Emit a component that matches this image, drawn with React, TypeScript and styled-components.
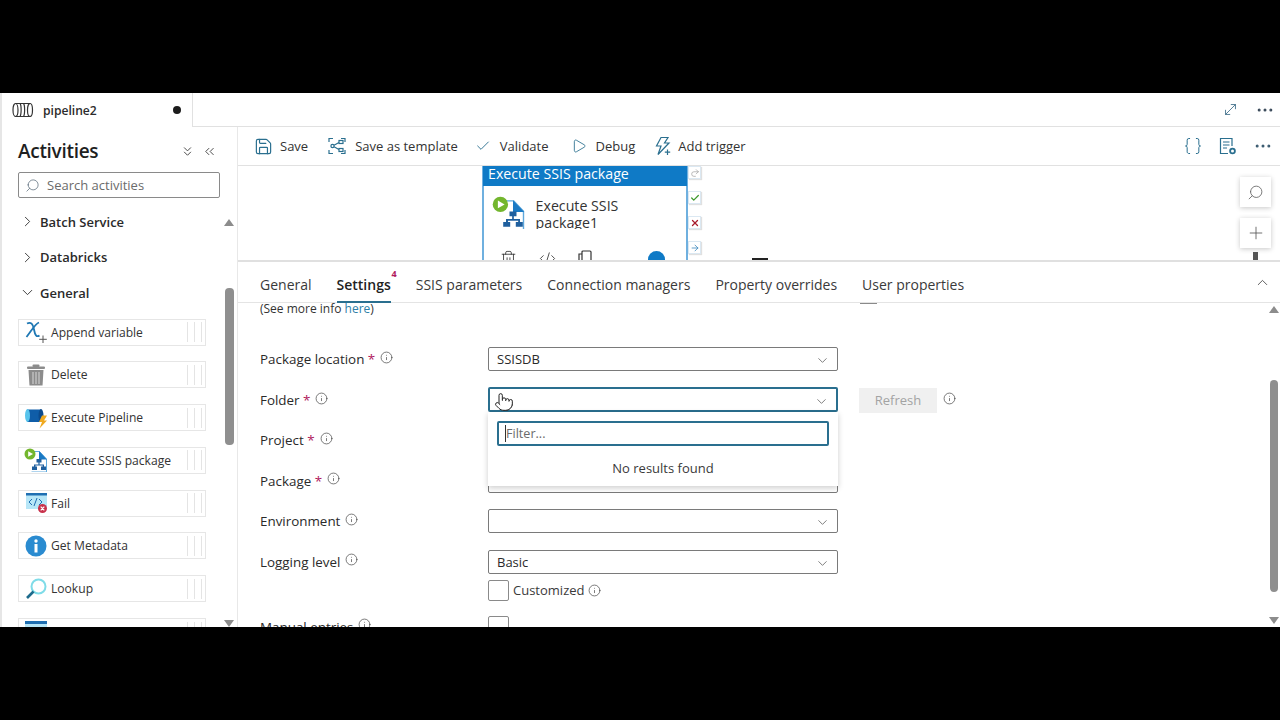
import React from "react";
import styled, { createGlobalStyle } from "styled-components";
import {
  Braces,
  Check,
  ChevronDown,
  ChevronRight,
  ChevronUp,
  ChevronsDown,
  ChevronsLeft,
  CodeXml,
  Info,
  MoveDiagonal,
  MoreHorizontal,
  Play,
  Plus,
  Pointer,
  Save,
  Search,
  Trash2,
  X,
  ArrowRight,
  Redo2,
} from "lucide-react";

const GlobalStyle = createGlobalStyle`
  html, body {
    margin: 0;
    padding: 0;
    background: #000;
    font-family: "Open Sans", "Noto Sans", sans-serif;
    color: #242424;
  }
  * { box-sizing: border-box; }
`;

const TEAL = "#2a6f8f";

/* icons */
const PipelineIcon = () => (
  <svg width="22" height="16" viewBox="0 0 22 16" fill="none" stroke="#333" strokeWidth="1.2">
    <ellipse cx="3.5" cy="8" rx="2.5" ry="6.5" />
    <path d="M3.5 1.5H18.5M3.5 14.5H18.5" />
    <ellipse cx="18" cy="8" rx="2.5" ry="6.5" />
    <path d="M8 1.5c1.5 1.5 1.5 11 0 13M11.5 1.5c1.5 1.5 1.5 11 0 13" />
  </svg>
);

const TemplateIcon = () => (
  <svg width="18" height="18" viewBox="0 0 18 18" fill="none" stroke={TEAL} strokeWidth="1.2">
    <path d="M1 5V1.5H5M13 1.5H17V5M1 13V16.5H5M13 16.5H17V13" />
    <circle cx="4.5" cy="9" r="1.6" />
    <rect x="11" y="3.5" width="4" height="3" />
    <rect x="11" y="11.5" width="4" height="3" />
    <path d="M6 8.2L11 5.5M6 9.8L11 12.5" />
  </svg>
);

const TriggerIcon = () => (
  <svg width="18" height="20" viewBox="0 0 18 20" fill="none" stroke={TEAL} strokeWidth="1.2">
    <path d="M7 1.5H14L10.5 7H15L4 18.5L7 10H2.5L7 1.5Z" />
    <path d="M13.5 13.5V19M10.8 16.2H16.2" />
  </svg>
);

const PropertiesIcon = () => (
  <svg width="18" height="19" viewBox="0 0 18 19" fill="none" stroke={TEAL} strokeWidth="1.2">
    <path d="M9 16.5H1.5V1.5H13V9" />
    <path d="M4 5H10.5M4 8H10.5M4 11H8" />
    <circle cx="13.5" cy="14" r="2.4" strokeWidth="1.8" />
  </svg>
);

const MagnifierIcon = ({ size = 16, color = "#5a6b7a" }: { size?: number; color?: string }) => (
  <Search size={size} color={color} strokeWidth={1.2} style={{ transform: "scaleX(-1)" }} />
);

const VariableIcon = () => (
  <svg width="24" height="24" viewBox="0 0 24 24" fill="none">
    <path d="M3 3.5C7 1.5 9 4 10 9.5C11 15 12.5 17.5 15.5 15.5" stroke="#1f78b4" strokeWidth="1.8" />
    <path d="M15 2.5C11 4 8 10 2.5 17" stroke="#1f78b4" strokeWidth="1.8" />
    <path d="M19 15.5V23M15.2 19.3H22.8" stroke="#555" strokeWidth="1" />
  </svg>
);

const TrashIcon = () => (
  <svg width="20" height="22" viewBox="0 0 20 22" fill="#8c8c8c">
    <rect x="6.5" y="0.5" width="7" height="2.5" rx="1" />
    <rect x="1" y="2.5" width="18" height="2.5" rx="1" />
    <path d="M2.5 6H17.5L16.5 21.5H3.5Z" />
    <path d="M7 8V20M10 8V20M13 8V20" stroke="#d8d8d8" strokeWidth="1" />
  </svg>
);

const ExecutePipelineIcon = () => (
  <svg width="24" height="22" viewBox="0 0 24 22">
    <path d="M3 2.5H17V15H3Z" fill="#0f5da8" />
    <ellipse cx="3.5" cy="8.5" rx="2.5" ry="6.5" fill="#58c4ec" />
    <ellipse cx="17" cy="8.5" rx="2.5" ry="6.5" fill="#0b4a8c" />
    <path d="M18 8.5L23 8.5L20 13.5H23L15.5 21.5L18 15H15L18 8.5Z" fill="#f0a91e" />
  </svg>
);

const SsisIcon = ({ scale = 1 }: { scale?: number }) => (
  <svg width={24 * scale} height={24 * scale} viewBox="0 0 24 24" style={{ flex: "none" }}>
    <path d="M7.5 3.5H15.5L22.5 11V24H7.5" fill="#fff" stroke="#5fa8dc" strokeWidth="1" />
    <path d="M15 3L23 11.5H15Z" fill="#1a79c4" />
    <circle cx="6" cy="6" r="5.5" fill="#73b62e" />
    <path d="M4.2 3.2L9 6L4.2 8.8Z" fill="#fff" />
    <path d="M12.5 11H17.5V14.5H15.6V16.5H20V18.5H22V22H17V18.5H18.7V17.6H11.4V18.5H13V22H8V18.5H10V16.5H14.4V14.5H12.5Z" fill="#1f5f9e" />
  </svg>
);

const FailIcon = () => (
  <svg width="23" height="22" viewBox="0 0 23 22">
    <rect x="1" y="2" width="21" height="15" fill="#b7e6f7" />
    <rect x="1" y="1" width="21" height="2.5" fill="#1f6fb2" />
    <path d="M7 7L4 10L7 13M9 14L12 6M14 7L17 10L14 13" stroke="#1f6fb2" strokeWidth="1" fill="none" />
    <circle cx="17.5" cy="16.5" r="4.5" fill="#c8314b" />
    <path d="M15.7 14.7L19.3 18.3M19.3 14.7L15.7 18.3" stroke="#fff" strokeWidth="1.2" />
  </svg>
);

const MetadataIcon = () => (
  <svg width="22" height="22" viewBox="0 0 22 22">
    <circle cx="11" cy="11" r="10.5" fill="#2a8bd0" />
    <circle cx="11" cy="6" r="1.7" fill="#fff" />
    <rect x="9.5" y="9" width="3" height="8.5" fill="#fff" />
  </svg>
);

const LookupIcon = () => (
  <svg width="24" height="24" viewBox="0 0 24 24" fill="none">
    <circle cx="14.5" cy="9.5" r="7" stroke="#7fdce8" strokeWidth="2" fill="#fff" />
    <path d="M9.5 14.5L3 21" stroke="#1d6b8c" strokeWidth="2.6" />
  </svg>
);

const ClippedIcon = () => (
  <svg width="22" height="22" viewBox="0 0 22 22">
    <rect x="0" y="0" width="22" height="20" fill="#b7e6f7" />
    <rect x="0" y="0" width="22" height="3" fill="#1f6fb2" />
  </svg>
);

/* page shell */
const Page = styled.div`
  width: 1280px;
  height: 720px;
  padding: 93px 0;
  background: #000;
  overflow: hidden;
`;

const Screen = styled.div`
  height: 534px;
  background: #fff;
  display: flex;
  flex-direction: column;
  overflow: hidden;
`;

const TabStrip = styled.div`
  height: 34px;
  flex: none;
  display: flex;
  align-items: stretch;
  justify-content: space-between;
  padding-right: 5px;
  border-bottom: 1px solid #e1e1e1;
`;

const DocTab = styled.div`
  width: 193px;
  margin-bottom: -1px;
  padding: 0 10px 0 10px;
  display: flex;
  align-items: center;
  background: #fff;
  border-right: 1px solid #e1e1e1;
  border-left: 2px solid #e6e6e6;
  font-size: 12.1px;
  font-weight: 600;
  color: #2b2b2b;
`;

const DocName = styled.span`
  margin-left: 9px;
  flex: 1;
`;

const Dirty = styled.span`
  width: 8px;
  height: 8px;
  margin-right: 1px;
  border-radius: 50%;
  background: #1c1c1c;
`;

const StripActions = styled.div`
  display: flex;
  align-items: center;
  gap: 16px;
`;

const Body = styled.div`
  flex: 1;
  min-height: 0;
  display: flex;
`;

/* activities panel */
const Sidebar = styled.aside`
  width: 238px;
  flex: none;
  display: flex;
  flex-direction: column;
  border-left: 2px solid #e6e6e6;
  border-right: 1px solid #e8e8e8;
`;

const SideHead = styled.div`
  height: 45px;
  flex: none;
  padding: 3px 20px 0 16px;
  display: flex;
  align-items: center;
  justify-content: space-between;
`;

const SideTitle = styled.h2`
  margin: 0;
  font-size: 19px;
  font-weight: 600;
  letter-spacing: -0.3px;
  color: #1f1f1f;
`;

const SideHeadIcons = styled.div`
  display: flex;
  align-items: center;
  gap: 7px;
`;

const SearchBox = styled.div`
  width: 202px;
  height: 26px;
  flex: none;
  margin-left: 16px;
  padding-left: 6px;
  display: flex;
  align-items: center;
  gap: 7px;
  border: 1px solid #8a8a8a;
  border-radius: 2px;
  font-size: 13px;
  color: #6b6b6b;
`;

const SideBody = styled.div`
  flex: 1;
  min-height: 0;
  display: flex;
`;

const ActivityList = styled.div`
  flex: 1;
  min-width: 0;
  padding: 6px 0 0 16px;
  overflow: hidden;
`;

const Group = styled.div`
  height: 35.5px;
  padding-left: 1px;
  display: flex;
  align-items: center;
  gap: 4px;
  font-size: 13px;
  font-weight: 600;
  color: #2a2a2a;
`;

const ActivityStack = styled.div`
  padding-top: 8px;
`;

const Activity = styled.div`
  width: 188px;
  height: 27px;
  margin-bottom: 15.8px;
  padding-left: 6px;
  display: flex;
  align-items: center;
  gap: 3px;
  border: 1px solid #e6e6e6;
  font-size: 12.1px;
  color: #333;
`;

const ActivityIcon = styled.span`
  width: 24px;
  height: 24px;
  flex: none;
  margin-left: -1px;
  display: flex;
  align-items: center;
  justify-content: center;
`;

const ActivityName = styled.span`
  flex: 1;
`;

const Grip = styled.span`
  width: 15px;
  height: 20px;
  margin-right: 3px;
  flex: none;
  border-left: 1px solid #e4e4e4;
  border-right: 1px solid #e4e4e4;
  background: linear-gradient(#e4e4e4, #e4e4e4) center / 1px 100% no-repeat;
`;

const ScrollTrack = styled.div`
  width: ${(p) => p.$width}px;
  flex: none;
  display: flex;
  flex-direction: column;
  align-items: center;
  background: #fff;
  padding: ${(p) => p.$pad || "0"};
`;

const ArrowUp = styled.span`
  width: 0;
  height: 0;
  flex: none;
  border-left: 5px solid transparent;
  border-right: 5px solid transparent;
  border-bottom: 7px solid #8c8c8c;
`;

const ArrowDown = styled.span`
  width: 0;
  height: 0;
  flex: none;
  margin-top: auto;
  border-left: 5px solid transparent;
  border-right: 5px solid transparent;
  border-top: 7px solid #8c8c8c;
`;

const Thumb = styled.span`
  width: ${(p) => p.$w}px;
  height: ${(p) => p.$height}px;
  margin-top: ${(p) => p.$top}px;
  flex: none;
  border-radius: 4px;
  background: #8f8f8f;
`;

/* main column */
const Main = styled.main`
  flex: 1;
  min-width: 0;
  display: flex;
  flex-direction: column;
`;

const Toolbar = styled.div`
  height: 39px;
  flex: none;
  padding: 0 7px 0 16px;
  display: flex;
  align-items: center;
  border-bottom: 1px solid #e1e1e1;
`;

const ToolButton = styled.div`
  margin-right: ${(p) => p.$gap}px;
  display: flex;
  align-items: center;
  gap: ${(p) => p.$iconGap}px;
  font-size: 13px;
  color: #333;
`;

const ToolRight = styled.div`
  margin-left: auto;
  display: flex;
  align-items: center;
  gap: 16px;
`;

const Canvas = styled.div`
  position: relative;
  height: 96px;
  flex: none;
  overflow: hidden;
  background: #fff;
  border-bottom: 2px solid #e0e0e0;
`;

const Node = styled.div`
  position: absolute;
  left: 244px;
  top: -6px;
  width: 206px;
  height: 126px;
  border: 2px solid #6fb0df;
  border-top: none;
  border-bottom: none;
`;

const NodeHeader = styled.div`
  height: 26px;
  margin: 0 -1px;
  padding: 0 5px;
  display: flex;
  align-items: center;
  background: #0f7ac6;
  color: #fff;
  font-size: 14.2px;
  font-weight: 500;
`;

const NodeBody = styled.div`
  height: 43px;
  padding: 10px 0 0 8px;
  display: flex;
  gap: 10px;
  overflow: hidden;
`;

const NodeText = styled.div`
  width: 110px;
  padding-top: 1px;
  font-size: 14.2px;
  line-height: 17px;
  color: #333;
`;

const NodeTools = styled.div`
  padding: 21px 0 0 16px;
  display: flex;
  align-items: flex-start;
  gap: 22px;
`;

const NodeDot = styled.span`
  width: 17px;
  height: 17px;
  margin: 1px 0 0 34px;
  border-radius: 50%;
  background: #0f7ac6;
`;

const Ports = styled.div`
  position: absolute;
  left: 450px;
  top: 0;
  display: flex;
  flex-direction: column;
  gap: 12px;
`;

const Port = styled.span`
  width: 13px;
  height: 13px;
  display: flex;
  align-items: center;
  justify-content: center;
  background: #fff;
  border: 1px solid #dbe8f2;
  box-shadow: 1px 1px 1px rgba(0, 0, 0, 0.12);
`;

const FloatTools = styled.div`
  position: absolute;
  right: 9px;
  top: 11px;
  display: flex;
  flex-direction: column;
  gap: 11px;
`;

const FloatButton = styled.div`
  width: 31px;
  height: 30px;
  display: flex;
  align-items: center;
  justify-content: center;
  background: #fff;
  box-shadow: 0 1px 5px rgba(0, 0, 0, 0.22);
`;

const CanvasNotch = styled.span`
  position: absolute;
  right: 22px;
  bottom: 0;
  width: 5px;
  height: 8px;
  background: #555;
`;

const SplitHandle = styled.span`
  position: absolute;
  left: 514px;
  bottom: 0;
  width: 16px;
  height: 2px;
  background: #222;
`;

const TabBar = styled.div`
  height: 41px;
  flex: none;
  padding: 0 9px 0 22px;
  display: flex;
  align-items: stretch;
  gap: 25px;
  border-bottom: 1px solid #e4e4e4;
`;

const Tab = styled.div`
  position: relative;
  display: flex;
  align-items: center;
  padding-top: 6px;
  font-size: 14px;
  font-weight: ${(p) => (p.$active ? 600 : 400)};
  color: ${(p) => (p.$active ? "#1f1f1f" : "#3a3a3a")};
  border-bottom: 2px solid ${(p) => (p.$active ? TEAL : "transparent")};
  margin-bottom: -1px;
`;

const TabBadge = styled.span`
  position: absolute;
  right: -6px;
  top: 5px;
  font-size: 9px;
  font-weight: 700;
  color: #b0195c;
`;

const TabCollapse = styled.div`
  margin-left: auto;
  display: flex;
  align-items: center;
`;

const FormArea = styled.div`
  flex: 1;
  min-height: 0;
  display: flex;
`;

const FormScroll = styled.div`
  position: relative;
  flex: 1;
  min-width: 0;
  padding: 0 0 0 22px;
`;

const ClippedMark = styled.span`
  position: absolute;
  left: 622px;
  top: 0;
  width: 17px;
  height: 1px;
  background: #8a8a8a;
`;

const MoreInfo = styled.div`
  height: 44px;
  font-size: 12px;
  line-height: 12px;
  color: #333;
  a {
    color: #2f7fa8;
  }
`;

const Row = styled.div`
  height: 24px;
  margin-bottom: 16.5px;
  display: grid;
  grid-template-columns: 228px 350px auto;
  align-items: center;
`;

const Label = styled.div`
  display: flex;
  align-items: center;
  gap: 5px;
  font-size: 13.4px;
  font-weight: 500;
  color: #2a2a2a;
`;

const Star = styled.span`
  color: #b0195c;
`;

const InfoMark = styled.span`
  display: inline-flex;
  margin-top: -4px;
`;

const Field = styled.div`
  position: relative;
  height: ${(p) => (p.$focus ? 25 : 24)}px;
  margin-top: ${(p) => (p.$focus ? -1 : 0)}px;
  padding: 0 7px 0 8px;
  display: flex;
  align-items: center;
  justify-content: space-between;
  background: #fff;
  border: ${(p) => (p.$focus ? `2px solid ${TEAL}` : "1px solid #7a7a7a")};
  border-radius: 2px;
  font-size: 13px;
  color: #2a2a2a;
`;

const FieldChevron = styled(ChevronDown)`
  margin-top: 3px;
`;

const HandCursor = styled.span`
  position: absolute;
  left: 4px;
  top: 3px;
  display: flex;
  z-index: 3;
`;

const Popover = styled.div`
  position: absolute;
  left: -2px;
  top: 23px;
  width: 350px;
  height: 74px;
  padding: 9px;
  background: #fff;
  box-shadow: 0 2px 6px rgba(0, 0, 0, 0.2);
  z-index: 2;
`;

const FilterInput = styled.div`
  height: 25px;
  padding-left: 6px;
  display: flex;
  align-items: center;
  border: 2px solid ${TEAL};
  border-radius: 2px;
  font-size: 12.6px;
  color: #6b6b6b;
  span {
    border-left: 1px solid #333;
  }
`;

const NoResults = styled.div`
  margin-top: 13px;
  text-align: center;
  font-size: 13px;
  color: #3a3a3a;
`;

const RefreshSlot = styled.div`
  margin: 0 0 0 21px;
  display: flex;
  align-items: center;
  gap: 6px;
`;

const RefreshButton = styled.div`
  width: 78px;
  height: 25px;
  display: flex;
  align-items: center;
  justify-content: center;
  background: #f0f0f0;
  color: #a3a3a3;
  font-size: 13px;
`;

const CheckRow = styled.div`
  height: 21px;
  margin: -10.5px 0 14px 228px;
  display: flex;
  align-items: center;
  gap: 4px;
  font-size: 13px;
  color: #3a3a3a;
`;

const CheckBox = styled.span`
  width: 21px;
  height: 21px;
  flex: none;
  border: 1px solid #8a8a8a;
  border-radius: 2px;
`;

const activities = [
  { name: "Append variable", icon: <VariableIcon /> },
  { name: "Delete", icon: <TrashIcon /> },
  { name: "Execute Pipeline", icon: <ExecutePipelineIcon /> },
  { name: "Execute SSIS package", icon: <SsisIcon /> },
  { name: "Fail", icon: <FailIcon /> },
  { name: "Get Metadata", icon: <MetadataIcon /> },
  { name: "Lookup", icon: <LookupIcon /> },
  { name: "", icon: <ClippedIcon /> },
];

const tabs = [
  "General",
  "Settings",
  "SSIS parameters",
  "Connection managers",
  "Property overrides",
  "User properties",
];

const InfoIcon = ({ size = 13 }: { size?: number }) => (
  <Info size={size} color="#444" strokeWidth={1.3} />
);

const Chevron = () => <FieldChevron size={15} color="#555" strokeWidth={1.2} />;

export default function App() {
  return (
    <Page>
      <GlobalStyle />
      <Screen>
        <TabStrip>
          <DocTab>
            <PipelineIcon />
            <DocName>pipeline2</DocName>
            <Dirty />
          </DocTab>
          <StripActions>
            <MoveDiagonal size={17} color="#3a6a86" strokeWidth={1.2} />
            <MoreHorizontal size={20} color="#3a4a5a" strokeWidth={1.6} />
          </StripActions>
        </TabStrip>
        <Body>
          <Sidebar>
            <SideHead>
              <SideTitle>Activities</SideTitle>
              <SideHeadIcons>
                <ChevronsDown size={15} color="#333" strokeWidth={1.4} />
                <ChevronsLeft size={15} color="#333" strokeWidth={1.4} />
              </SideHeadIcons>
            </SideHead>
            <SearchBox>
              <MagnifierIcon size={15} />
              Search activities
            </SearchBox>
            <SideBody>
              <ActivityList>
                <Group>
                  <ChevronRight size={17} color="#333" strokeWidth={1.3} />
                  Batch Service
                </Group>
                <Group>
                  <ChevronRight size={17} color="#333" strokeWidth={1.3} />
                  Databricks
                </Group>
                <Group>
                  <ChevronDown size={17} color="#333" strokeWidth={1.3} />
                  General
                </Group>
                <ActivityStack>
                  {activities.map((a, i) => (
                    <Activity key={i}>
                      <ActivityIcon>{a.icon}</ActivityIcon>
                      <ActivityName>{a.name}</ActivityName>
                      <Grip />
                    </Activity>
                  ))}
                </ActivityStack>
              </ActivityList>
              <ScrollTrack $width={16} $pad="21px 0 0">
                <ArrowUp />
                <Thumb $w={9} $height={157} $top={62} />
                <ArrowDown />
              </ScrollTrack>
            </SideBody>
          </Sidebar>
          <Main>
            <Toolbar>
              <ToolButton $gap={20} $iconGap={7}>
                <Save size={19} color={TEAL} strokeWidth={1.5} />
                Save
              </ToolButton>
              <ToolButton $gap={17} $iconGap={9}>
                <TemplateIcon />
                Save as template
              </ToolButton>
              <ToolButton $gap={22} $iconGap={9}>
                <Check size={16} color={TEAL} strokeWidth={1.4} />
                Validate
              </ToolButton>
              <ToolButton $gap={19} $iconGap={9}>
                <Play size={16} color={TEAL} strokeWidth={1.3} />
                Debug
              </ToolButton>
              <ToolButton $gap={0} $iconGap={6}>
                <TriggerIcon />
                Add trigger
              </ToolButton>
              <ToolRight>
                <Braces size={20} color={TEAL} strokeWidth={1.2} />
                <PropertiesIcon />
                <MoreHorizontal size={20} color="#3a5a70" strokeWidth={1.6} />
              </ToolRight>
            </Toolbar>
            <Canvas>
              <Node>
                <NodeHeader>Execute SSIS package</NodeHeader>
                <NodeBody>
                  <SsisIcon scale={1.4} />
                  <NodeText>
                    Execute SSIS
                    <br />
                    package1
                  </NodeText>
                </NodeBody>
                <NodeTools>
                  <Trash2 size={17} color="#333" strokeWidth={1.2} />
                  <CodeXml size={17} color="#333" strokeWidth={1.2} />
                  <svg width="14" height="16" viewBox="0 0 14 16" fill="none" stroke="#333" strokeWidth="1.2">
                    <rect x="4" y="1" width="9" height="12" rx="1" />
                    <path d="M4 4H1V15H9V13" />
                  </svg>
                  <NodeDot />
                </NodeTools>
              </Node>
              <Ports>
                <Port>
                  <Redo2 size={10} color="#9a9a9a" strokeWidth={1.6} />
                </Port>
                <Port>
                  <Check size={10} color="#3f9a2e" strokeWidth={3} />
                </Port>
                <Port>
                  <X size={10} color="#a81c2c" strokeWidth={3} />
                </Port>
                <Port>
                  <ArrowRight size={10} color="#2f7fb8" strokeWidth={1.8} />
                </Port>
              </Ports>
              <FloatTools>
                <FloatButton>
                  <MagnifierIcon size={17} color="#666" />
                </FloatButton>
                <FloatButton>
                  <Plus size={20} color="#555" strokeWidth={1} />
                </FloatButton>
              </FloatTools>
              <CanvasNotch />
              <SplitHandle />
            </Canvas>
            <TabBar>
              {tabs.map((t) => (
                <Tab key={t} $active={t === "Settings"}>
                  {t}
                  {t === "Settings" && <TabBadge>4</TabBadge>}
                </Tab>
              ))}
              <TabCollapse>
                <ChevronUp size={17} color="#444" strokeWidth={1.2} />
              </TabCollapse>
            </TabBar>
            <FormArea>
              <FormScroll>
                <ClippedMark />
                <MoreInfo>
                  (See more info <a>here</a>)
                </MoreInfo>
                <Row>
                  <Label>
                    <span>
                      Package location <Star>*</Star>
                    </span>
                    <InfoMark>
                      <InfoIcon />
                    </InfoMark>
                  </Label>
                  <Field>
                    SSISDB
                    <Chevron />
                  </Field>
                </Row>
                <Row>
                  <Label>
                    <span>
                      Folder <Star>*</Star>
                    </span>
                    <InfoMark>
                      <InfoIcon />
                    </InfoMark>
                  </Label>
                  <Field $focus>
                    <span />
                    <Chevron />
                    <HandCursor>
                      <Pointer size={20} color="#222" fill="#fff" strokeWidth={1.2} />
                    </HandCursor>
                    <Popover>
                      <FilterInput>
                        <span>Filter...</span>
                      </FilterInput>
                      <NoResults>No results found</NoResults>
                    </Popover>
                  </Field>
                  <RefreshSlot>
                    <RefreshButton>Refresh</RefreshButton>
                    <InfoMark>
                      <InfoIcon />
                    </InfoMark>
                  </RefreshSlot>
                </Row>
                <Row>
                  <Label>
                    <span>
                      Project <Star>*</Star>
                    </span>
                    <InfoMark>
                      <InfoIcon />
                    </InfoMark>
                  </Label>
                  <Field>
                    <span />
                    <Chevron />
                  </Field>
                </Row>
                <Row>
                  <Label>
                    <span>
                      Package <Star>*</Star>
                    </span>
                    <InfoMark>
                      <InfoIcon />
                    </InfoMark>
                  </Label>
                  <Field>
                    <span />
                    <Chevron />
                  </Field>
                </Row>
                <Row>
                  <Label>
                    Environment
                    <InfoMark>
                      <InfoIcon />
                    </InfoMark>
                  </Label>
                  <Field>
                    <span />
                    <Chevron />
                  </Field>
                </Row>
                <Row>
                  <Label>
                    Logging level
                    <InfoMark>
                      <InfoIcon />
                    </InfoMark>
                  </Label>
                  <Field>
                    Basic
                    <Chevron />
                  </Field>
                </Row>
                <CheckRow>
                  <CheckBox />
                  Customized
                  <InfoIcon />
                </CheckRow>
                <Row>
                  <Label>
                    Manual entries
                    <InfoMark>
                      <InfoIcon />
                    </InfoMark>
                  </Label>
                  <CheckBox />
                </Row>
              </FormScroll>
              <ScrollTrack $width={12} $pad="3px 0 3px">
                <ArrowUp />
                <Thumb $w={8} $height={212} $top={67} />
                <ArrowDown />
              </ScrollTrack>
            </FormArea>
          </Main>
        </Body>
      </Screen>
    </Page>
  );
}
